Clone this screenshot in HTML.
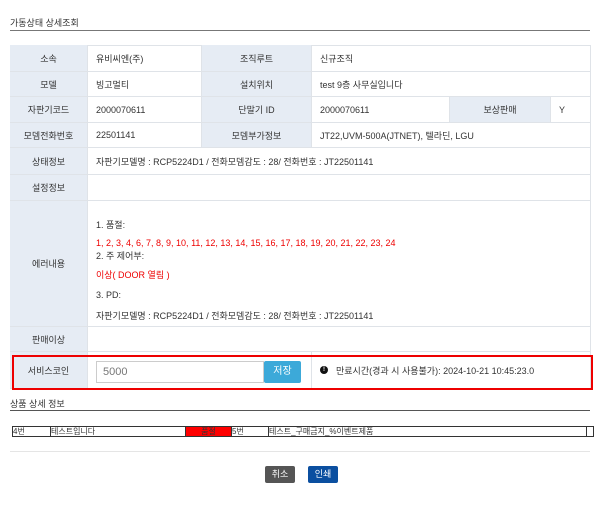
<!DOCTYPE html>
<html><head><meta charset="utf-8"><style>
*{margin:0;padding:0;box-sizing:border-box}
body{width:600px;height:505px;background:#fff;font-family:"Liberation Sans","Noto Sans CJK KR",sans-serif;font-size:9px;color:#333;position:relative;overflow:hidden}
.a{position:absolute}
.c{position:absolute;border-right:1px solid #dfe3e8;border-bottom:1px solid #dfe3e8;display:flex;align-items:center;padding-left:8px;white-space:nowrap}
.l{background:#e6ecf4;justify-content:center;padding-left:0;color:#333}
.r{color:#e00}
.p{position:absolute;top:0;height:9px;border-right:1px solid #333}
</style></head><body>
<div class="a" style="left:10px;top:16px;font-size:9px">가동상태 상세조회</div>
<div class="a" style="left:10px;top:30px;width:580px;height:1px;background:#777"></div>
<div class="a" style="left:10px;top:45px;width:581px;height:344px;border-top:1px solid #dfe3e8;border-left:1px solid #dfe3e8"></div>

<div class="c l" style="left:10px;top:45px;width:78px;height:27px">소속</div>
<div class="c" style="left:88px;top:45px;width:114px;height:27px">유비씨엔(주)</div>
<div class="c l" style="left:202px;top:45px;width:110px;height:27px">조직루트</div>
<div class="c" style="left:312px;top:45px;width:279px;height:27px">신규조직</div>

<div class="c l" style="left:10px;top:72px;width:78px;height:25px">모델</div>
<div class="c" style="left:88px;top:72px;width:114px;height:25px">빙고멀티</div>
<div class="c l" style="left:202px;top:72px;width:110px;height:25px">설치위치</div>
<div class="c" style="left:312px;top:72px;width:279px;height:25px">test 9층 사무실입니다</div>

<div class="c l" style="left:10px;top:97px;width:78px;height:26px">자판기코드</div>
<div class="c" style="left:88px;top:97px;width:114px;height:26px">2000070611</div>
<div class="c l" style="left:202px;top:97px;width:110px;height:26px">단말기 ID</div>
<div class="c" style="left:312px;top:97px;width:138px;height:26px">2000070611</div>
<div class="c l" style="left:450px;top:97px;width:101px;height:26px">보상판매</div>
<div class="c" style="left:551px;top:97px;width:40px;height:26px">Y</div>

<div class="c l" style="left:10px;top:123px;width:78px;height:25px">모뎀전화번호</div>
<div class="c" style="left:88px;top:123px;width:114px;height:25px">22501141</div>
<div class="c l" style="left:202px;top:123px;width:110px;height:25px">모뎀부가정보</div>
<div class="c" style="left:312px;top:123px;width:279px;height:25px">JT22,UVM-500A(JTNET), 텔라딘, LGU</div>

<div class="c l" style="left:10px;top:148px;width:78px;height:27px">상태정보</div>
<div class="c" style="left:88px;top:148px;width:503px;height:27px">자판기모델명 : RCP5224D1 / 전화모뎀감도 : 28/ 전화번호 : JT22501141</div>

<div class="c l" style="left:10px;top:175px;width:78px;height:26px">설정정보</div>
<div class="c" style="left:88px;top:175px;width:503px;height:26px"></div>

<div class="c l" style="left:10px;top:201px;width:78px;height:126px">에러내용</div>
<div class="c" style="left:88px;top:201px;width:503px;height:126px;display:block;padding:0">
<div class="a" style="left:8px;top:17px">1. 품절:</div>
<div class="a r" style="left:8px;top:37px">1, 2, 3, 4, 6, 7, 8, 9, 10, 11, 12, 13, 14, 15, 16, 17, 18, 19, 20, 21, 22, 23, 24</div>
<div class="a" style="left:8px;top:48px">2. 주 제어부:</div>
<div class="a r" style="left:8px;top:67px">이상( DOOR 열림 )</div>
<div class="a" style="left:8px;top:89px">3. PD:</div>
<div class="a" style="left:8px;top:108px">자판기모델명 : RCP5224D1 / 전화모뎀감도 : 28/ 전화번호 : JT22501141</div>
</div>

<div class="c l" style="left:10px;top:327px;width:78px;height:25px">판매이상</div>
<div class="c" style="left:88px;top:327px;width:503px;height:25px"></div>

<div class="c l" style="left:10px;top:352px;width:78px;height:37px">서비스코인</div>
<div class="c" style="left:88px;top:352px;width:224px;height:37px"></div>
<div class="c" style="left:312px;top:352px;width:279px;height:37px">
<span style="display:inline-block;width:8px;height:8px;border-radius:50%;background:#111;color:#fff;font-size:6px;text-align:center;line-height:8px;font-weight:bold;margin-right:8px">!</span>만료시간(경과 시 사용불가): 2024-10-21 10:45:23.0</div>
<div class="a" style="left:96px;top:361px;width:168px;height:22px;border:1px solid #ccc;background:#fff;color:#777;font-size:11px;padding-left:6px;line-height:20px">5000</div>
<div class="a" style="left:264px;top:361px;width:37px;height:22px;background:#3ca9d9;color:#fff;font-size:10px;text-align:center;line-height:22px;border-radius:2px">저장</div>
<div class="a" style="left:12px;top:355px;width:581px;height:35px;border:2px solid #e00"></div>

<div class="a" style="left:10px;top:397px">상품 상세 정보</div>
<div class="a" style="left:10px;top:410px;width:580px;height:1px;background:#555"></div>

<div class="a" style="left:12px;top:426px;width:582px;height:11px;border:1px solid #333;font-size:8px;line-height:9px;white-space:nowrap">
<div class="p" style="left:0;width:38px">4번</div>
<div class="p" style="left:38px;width:135px">테스트입니다</div>
<div class="p" style="left:173px;width:46px;background:#f00;text-align:center">품절</div>
<div class="p" style="left:219px;width:37px">5번</div>
<div class="p" style="left:256px;width:318px">테스트_구매금지_%이벤트제품</div>
</div>

<div class="a" style="left:10px;top:451px;width:580px;height:1px;background:#e5e5e5"></div>
<div class="a" style="left:265px;top:466px;width:30px;height:17px;background:#555;color:#fff;text-align:center;line-height:17px;border-radius:2px">취소</div>
<div class="a" style="left:308px;top:466px;width:30px;height:17px;background:#0b4fa0;color:#fff;text-align:center;line-height:17px;border-radius:2px">인쇄</div>
</body></html>
